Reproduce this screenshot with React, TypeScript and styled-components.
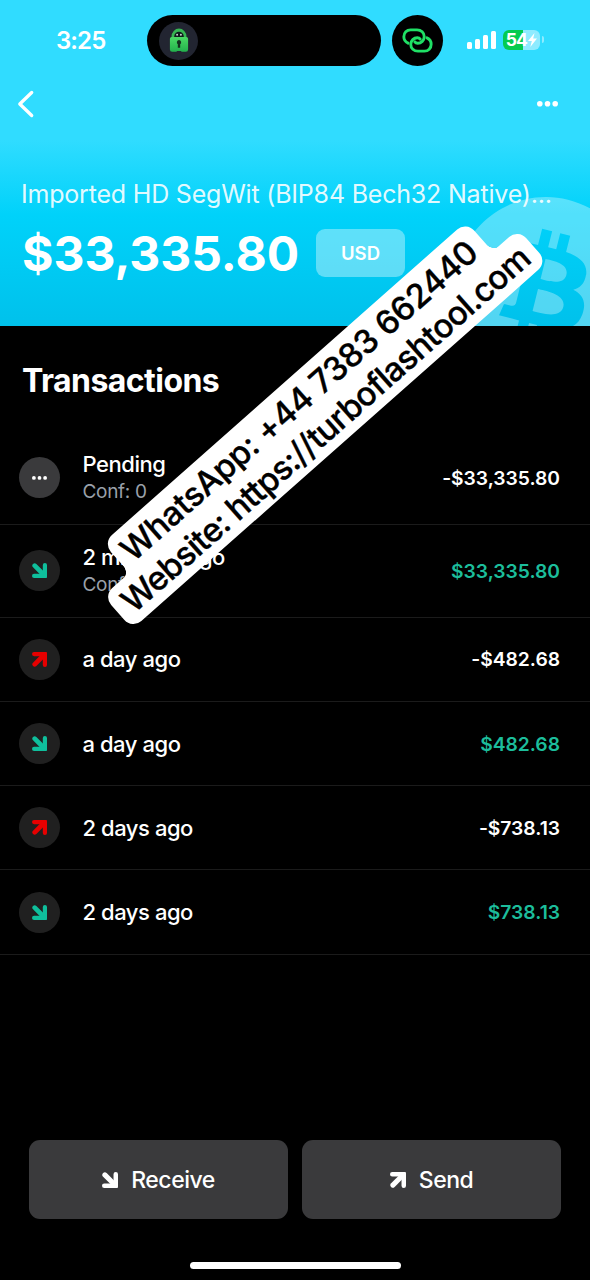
import React from "react";
import styled, { createGlobalStyle } from "styled-components";
import { SiBitcoin } from "react-icons/si";

const GlobalStyle = createGlobalStyle`
  *, *::before, *::after { box-sizing: border-box; }
  html, body { margin: 0; padding: 0; background: #000; }
  body { font-family: Inter, "Liberation Sans", sans-serif; color: #fff; }
  button { font: inherit; color: inherit; border: 0; margin: 0; padding: 0; background: none; }
`;

const Screen = styled.main`
  position: relative;
  display: flex;
  flex-direction: column;
  width: 590px;
  height: 1280px;
  overflow: hidden;
  background: #000;
`;

const Header = styled.header`
  position: relative;
  display: flex;
  flex-direction: column;
  height: 326px;
  flex: none;
  overflow: hidden;
  background: linear-gradient(180deg, #30dcff 0, #30dcff 140px, #00d2fa 215px, #00c1eb 326px);
`;

const StatusBar = styled.div`
  display: flex;
  align-items: center;
  height: 51px;
  margin-top: 15px;
  padding-left: 56px;
`;

const Clock = styled.time`
  width: 91px;
  font-size: 24px;
  font-weight: 600;
  letter-spacing: -0.9px;
  line-height: 28px;
`;

const Island = styled.div`
  display: flex;
  align-items: center;
  width: 234px;
  height: 51px;
  padding-left: 12px;
  border-radius: 26px;
  background: #000;
`;

const IslandBadge = styled.div`
  display: flex;
  align-items: center;
  justify-content: center;
  width: 39px;
  height: 38px;
  border-radius: 50%;
  background: #222531;
`;

const LinkBubble = styled.div`
  display: flex;
  align-items: center;
  justify-content: center;
  width: 51px;
  height: 51px;
  margin-left: 11px;
  border-radius: 50%;
  background: #000;
`;

const Signal = styled.div`
  display: flex;
  align-items: flex-end;
  gap: 3px;
  height: 18px;
  margin: -2px 0 0 24px;
`;

const SignalBar = styled.span<{ $h: number }>`
  width: 5px;
  height: ${(p) => p.$h}px;
  border-radius: 1.5px;
  background: #fff;
`;

const Battery = styled.div`
  display: flex;
  align-items: center;
  justify-content: center;
  width: 37px;
  height: 20px;
  margin: -2px 0 0 7px;
  border-radius: 6px;
  background: linear-gradient(90deg, #04cb50 0 20px, #8eebff 20px);
  font-size: 17.5px;
  font-weight: 700;
  letter-spacing: -0.9px;
  line-height: 20px;
`;

const Bolt = styled.svg`
  margin-left: 1.5px;
`;

const BatteryTip = styled.span`
  width: 2px;
  height: 7px;
  margin: -2px 0 0 1.5px;
  border-radius: 0 3px 3px 0;
  background: #8eebff;
`;

const NavBar = styled.nav`
  display: flex;
  align-items: center;
  justify-content: space-between;
  height: 40px;
  margin-top: 18px;
  padding: 0 32px 0 17px;
`;

const IconButton = styled.button`
  display: flex;
`;

const Watermark = styled(SiBitcoin)`
  position: absolute;
  left: 455px;
  top: 197px;
  width: 182px;
  height: 182px;
  color: rgba(255, 255, 255, 0.32);
`;

const WalletName = styled.h1`
  position: relative;
  margin: 54px 0 0 21px;
  font-size: 25px;
  font-weight: 400;
  letter-spacing: -0.2px;
  line-height: 32px;
  color: rgba(255, 255, 255, 0.9);
  white-space: nowrap;
`;

const BalanceRow = styled.div`
  display: flex;
  align-items: center;
  gap: 18px;
  height: 48px;
  margin: 19px 0 0 22px;
`;

const Balance = styled.div`
  width: 276px;
  padding-top: 2px;
  font-size: 48px;
  font-weight: 700;
  letter-spacing: 0;
  line-height: 48px;
  white-space: nowrap;
`;

const UnitButton = styled.button`
  width: 89px;
  height: 48px;
  padding-bottom: 1px;
  border-radius: 9px;
  background: rgba(255, 255, 255, 0.37);
  font-size: 18.5px;
  font-weight: 600;
  text-align: center;
`;

const SectionTitle = styled.h2`
  margin: 35px 0 0 22px;
  font-size: 32px;
  font-weight: 700;
  letter-spacing: -0.55px;
  line-height: 40px;
`;

const List = styled.ul`
  display: flex;
  flex-direction: column;
  margin: 31px 0 0;
  padding: 0;
  list-style: none;
`;

const Row = styled.li<{ $tall?: boolean }>`
  display: flex;
  align-items: center;
  height: ${(p) => (p.$tall ? 92.8 : 84.3)}px;
  padding: 0 30px 0 19px;
  border-bottom: 1px solid #1b1b1b;
`;

const RowIcon = styled.div<{ $pending?: boolean }>`
  display: flex;
  align-items: center;
  justify-content: center;
  width: 41px;
  height: 41px;
  margin-right: 22.5px;
  border-radius: 50%;
  background: ${(p) => (p.$pending ? "#3a3a3c" : "#202020")};
`;

const RowText = styled.div`
  display: flex;
  flex: 1;
  flex-direction: column;
`;

const RowTitle = styled.span<{ $single?: boolean }>`
  padding-top: ${(p) => (p.$single ? 1 : 0)}px;
  font-size: 22px;
  font-weight: 500;
  letter-spacing: -0.45px;
  line-height: 27px;
`;

const RowSub = styled.span`
  font-size: 19px;
  letter-spacing: -0.3px;
  line-height: 27px;
  color: #9aa0aa;
`;

const Amount = styled.span<{ $in?: boolean }>`
  padding-top: 0.5px;
  font-size: 19.3px;
  font-weight: 600;
  letter-spacing: -0.03px;
  font-feature-settings: "calt" 0;
  color: ${(p) => (p.$in ? "#1cbd9b" : "#fff")};
`;

const Actions = styled.div`
  display: flex;
  gap: 14px;
  margin: auto 29px 0;
`;

const ActionButton = styled.button`
  display: flex;
  flex: 1;
  align-items: center;
  justify-content: center;
  gap: 13px;
  height: 79px;
  border-radius: 11px;
  background: #3a3a3c;
  font-size: 23px;
  font-weight: 500;
  letter-spacing: -0.5px;
`;

const HomeIndicator = styled.div`
  width: 211px;
  height: 7px;
  margin: 43px auto 11px;
  border-radius: 4px;
  background: #fff;
`;

const Sticker = styled.aside`
  position: absolute;
  left: 34.5px;
  top: 371.5px;
  display: flex;
  flex-direction: column;
  align-items: center;
  width: 554px;
  transform: rotate(-41.5deg);
  color: #000;
  font-size: 33px;
  font-weight: 500;
  white-space: nowrap;
  -webkit-text-stroke: 0.35px #000;
`;

const StickerTop = styled.div`
  position: relative;
  display: flex;
  align-items: center;
  justify-content: center;
  width: 485px;
  height: 42px;
  padding: 3px 2px 0 0;
  border-radius: 12px 12px 0 0;
  background: #fff;
  letter-spacing: -0.36px;

  &::before, &::after {
    content: "";
    position: absolute;
    bottom: 0;
    width: 12px;
    height: 12px;
  }
  &::before {
    right: calc(100% - 1px);
    background: radial-gradient(circle at 0 0, transparent 11px, #fff 11.5px);
  }
  &::after {
    left: calc(100% - 1px);
    background: radial-gradient(circle at 100% 0, transparent 11px, #fff 11.5px);
  }
`;

const StickerBottom = styled.div`
  position: relative;
  display: flex;
  align-items: center;
  justify-content: center;
  width: 554px;
  height: 44px;
  margin-top: -2px;
  border-radius: 12px;
  background: #fff;
  letter-spacing: -0.78px;
`;

function Arrow({ up, color, size = 15 }: { up?: boolean; color: string; size?: number }) {
  return (
    <svg width={size} height={size} viewBox="0 0 15 15" fill="none" stroke={color} strokeLinecap="round">
      <g transform={up ? "matrix(1 0 0 -1 0 15)" : undefined}>
        <path d="M2.700 2.700 L11 11" strokeWidth="4.700" />
        <path d="M12.900 2.100 V12.400 Q12.900 12.900 12.400 12.900 H2.100" strokeWidth="4.200" strokeLinejoin="miter" />
        <path d="M11 11 H14.200 V14.200 H11 Z" fill={color} strokeWidth="1.400" strokeLinejoin="round" />
      </g>
    </svg>
  );
}

function Dots({ width, r }: { width: number; r: number }) {
  return (
    <svg width={width} height={r * 2} fill="#fff">
      <circle cx={r} cy={r} r={r} />
      <circle cx={width / 2} cy={r} r={r} />
      <circle cx={width - r} cy={r} r={r} />
    </svg>
  );
}

function LockIcon() {
  return (
    <svg width="20" height="25" viewBox="0 0 22 26" preserveAspectRatio="none">
      <defs>
        <linearGradient id="lock" x1="0" y1="0" x2="0" y2="1">
          <stop offset="0" stopColor="#4bd964" />
          <stop offset="1" stopColor="#22b14c" />
        </linearGradient>
      </defs>
      <path d="M2.800 11V8.800a8.200 8.200 0 0 1 16.400 0V11z" fill="#36b552" />
      <path d="M5.800 10V8.600a5.200 4.800 0 0 1 10.400 0V10z" fill="#101a1c" />
      <circle cx="8.900" cy="7" r="1" fill="#d6e6dc" />
      <circle cx="13.100" cy="7" r="1" fill="#d6e6dc" />
      <path d="M3 9.300h16a2 2 0 0 1 2 2v11a2.500 2.500 0 0 1-2.500 2.500H14l-1-.9H9l-1 .9H3.500A2.500 2.500 0 0 1 1 22.300v-11a2 2 0 0 1 2-2z" fill="url(#lock)" />
      <path d="M11 12.500a2.400 2.400 0 0 1 1.300 4.400v3.600H9.700V16.900A2.400 2.400 0 0 1 11 12.500z" fill="#14301f" />
    </svg>
  );
}

function LinkIcon() {
  return (
    <svg width="31" height="25" viewBox="0 0 32 26" fill="none" stroke="#1fe065" strokeWidth="3" strokeLinecap="round">
      <path d="M6.200 15.800 C3.500 14.600 1.800 12.200 1.800 9.200 C1.800 5 4.800 1.900 8.800 1.900 H15.600 C19.800 1.900 23 5 23 8.900 C23 12.900 19.800 15.900 16.200 15.900 C14.600 15.900 13.800 15.300 13.200 14.400" />
      <path d="M25.800 10.200 C28.500 11.400 30.200 13.800 30.200 16.800 C30.200 21 27.200 24.100 23.200 24.100 H16.400 C12.200 24.100 9 21 9 17.100 C9 13.100 12.200 10.100 15.800 10.100 C17.400 10.100 18.200 10.700 18.800 11.600" />
    </svg>
  );
}

const transactions = [
  { title: "Pending", sub: "Conf: 0", amount: "-$33,335.80", kind: "pending" },
  { title: "2 minutes ago", sub: "Conf: 1", amount: "$33,335.80", kind: "in" },
  { title: "a day ago", amount: "-$482.68", kind: "out" },
  { title: "a day ago", amount: "$482.68", kind: "in" },
  { title: "2 days ago", amount: "-$738.13", kind: "out" },
  { title: "2 days ago", amount: "$738.13", kind: "in" },
];

export default function App() {
  return (
    <>
      <GlobalStyle />
      <Screen>
        <Header>
          <Watermark />
          <StatusBar>
            <Clock>3:25</Clock>
            <Island>
              <IslandBadge>
                <LockIcon />
              </IslandBadge>
            </Island>
            <LinkBubble>
              <LinkIcon />
            </LinkBubble>
            <Signal>
              {[7, 10, 14, 18].map((h) => (
                <SignalBar key={h} $h={h} />
              ))}
            </Signal>
            <Battery>
              54
              <Bolt width="9" height="14" viewBox="0 0 9 14" fill="#fff">
                <path d="M6.500 0 L0 8 H3.800 L2.300 14 L9 5.600 H5.200 Z" />
              </Bolt>
            </Battery>
            <BatteryTip />
          </StatusBar>
          <NavBar>
            <IconButton aria-label="Back">
              <svg width="18" height="28" viewBox="0 0 18 28" fill="none" stroke="#fff" strokeWidth="3.300" strokeLinecap="round" strokeLinejoin="round">
                <path d="M14.700 2.500 L2.800 14 L14.700 25.500" />
              </svg>
            </IconButton>
            <IconButton aria-label="More">
              <Dots width={21} r={2.8} />
            </IconButton>
          </NavBar>
          <WalletName>Imported HD SegWit (BIP84 Bech32 Native)...</WalletName>
          <BalanceRow>
            <Balance>$33,335.80</Balance>
            <UnitButton>USD</UnitButton>
          </BalanceRow>
        </Header>
        <SectionTitle>Transactions</SectionTitle>
        <List>
          {transactions.map((t, i) => (
            <Row key={i} $tall={!!t.sub}>
              <RowIcon $pending={t.kind === "pending"}>
                {t.kind === "pending" ? (
                  <Dots width={15} r={1.9} />
                ) : (
                  <Arrow up={t.kind === "out"} color={t.kind === "out" ? "#e60000" : "#0fbf9c"} />
                )}
              </RowIcon>
              <RowText>
                <RowTitle $single={!t.sub}>{t.title}</RowTitle>
                {t.sub && <RowSub>{t.sub}</RowSub>}
              </RowText>
              <Amount $in={t.kind === "in"}>{t.amount}</Amount>
            </Row>
          ))}
        </List>
        <Actions>
          <ActionButton>
            <Arrow color="#fff" size={16} />
            Receive
          </ActionButton>
          <ActionButton>
            <Arrow up color="#fff" size={16} />
            Send
          </ActionButton>
        </Actions>
        <HomeIndicator />
        <Sticker>
          <StickerTop>WhatsApp: +44 7383 662440</StickerTop>
          <StickerBottom>Website: https://turboflashtool.com</StickerBottom>
        </Sticker>
      </Screen>
    </>
  );
}
